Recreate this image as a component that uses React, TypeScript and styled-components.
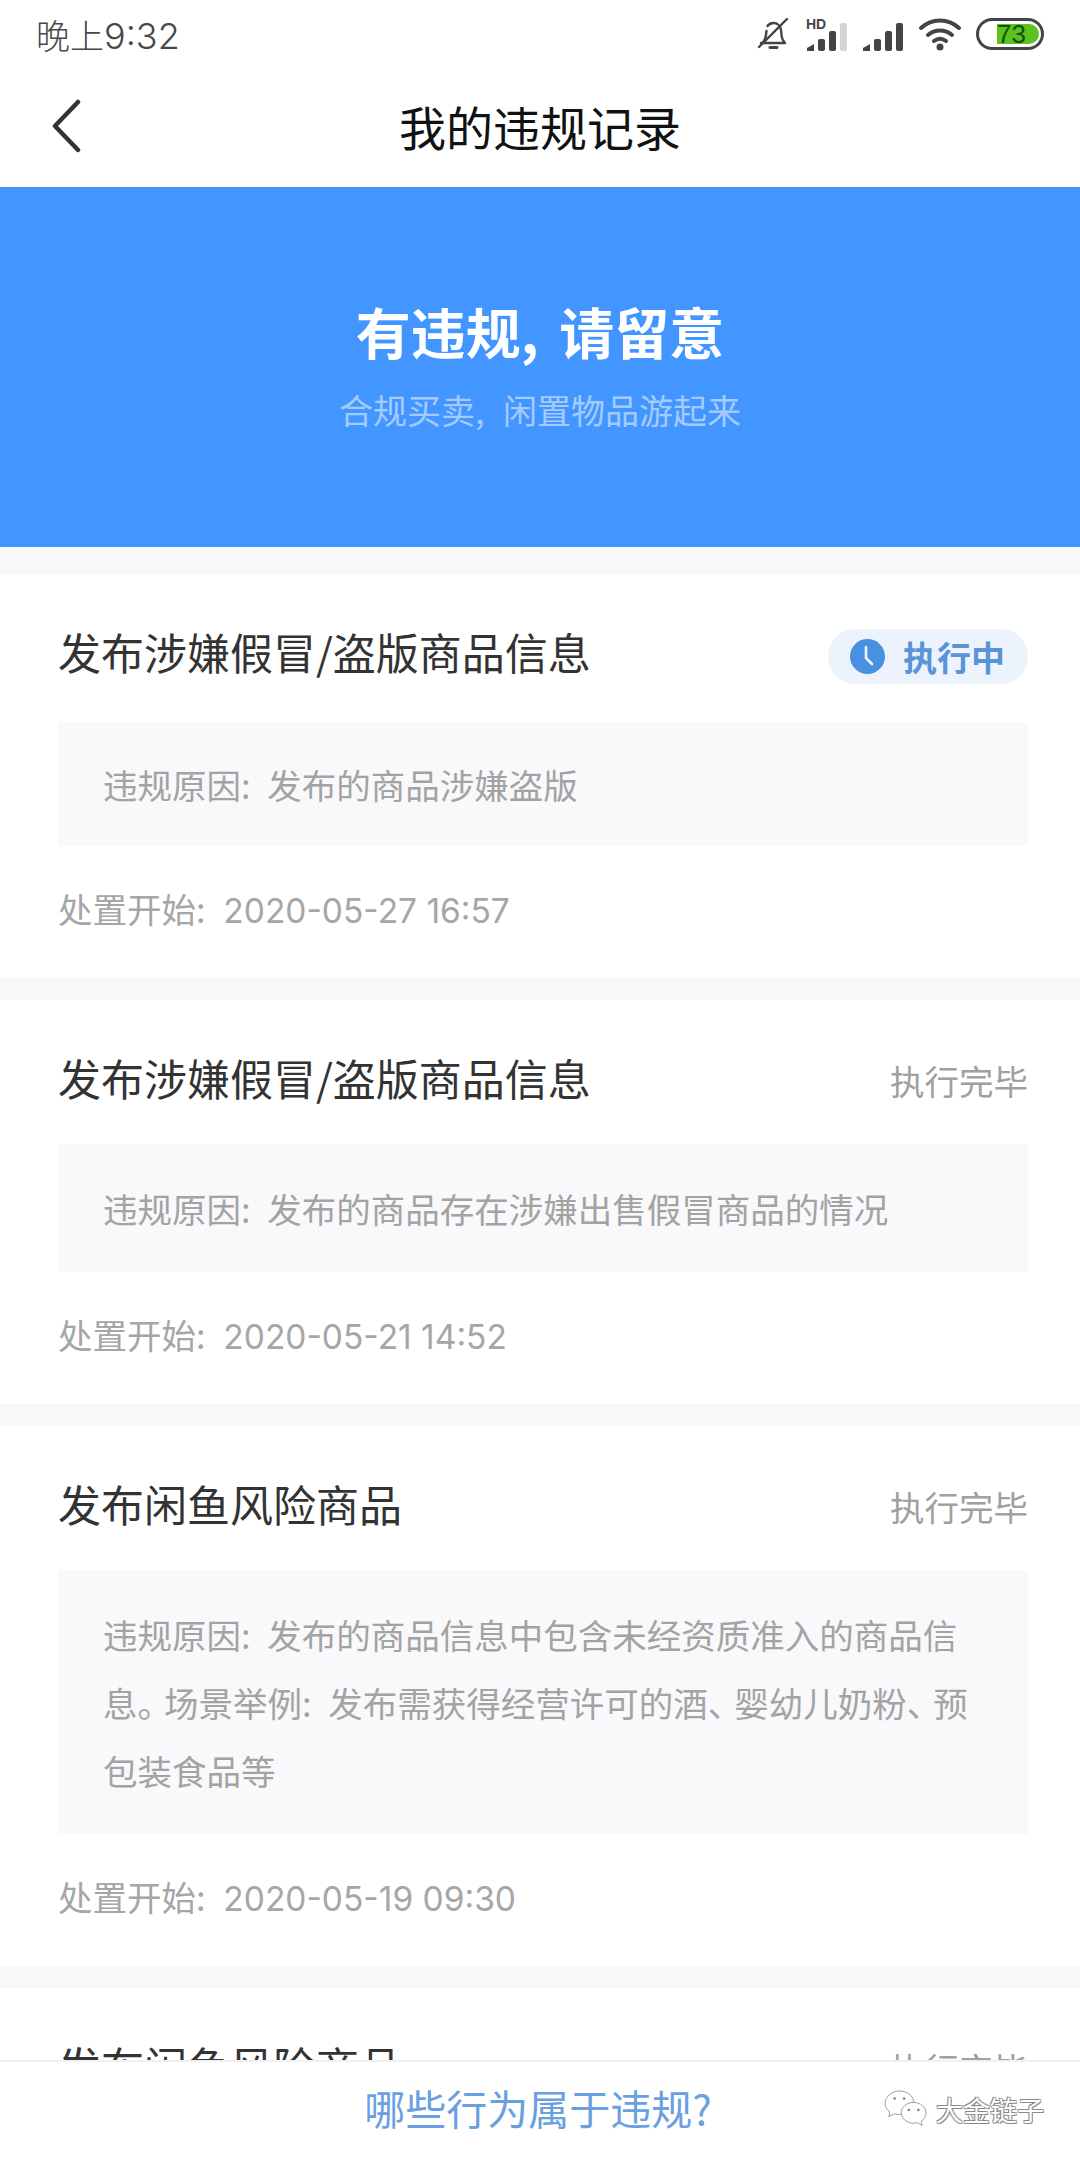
import styled, { createGlobalStyle } from "styled-components";

const GlobalStyle = createGlobalStyle`
  html, body { margin: 0; padding: 0; background: #fff; }
  * { box-sizing: border-box; }
  body { font-family: "Noto Sans CJK SC", "Noto Sans", sans-serif; }
`;

const Page = styled.div`
  position: relative;
  width: 1080px;
  height: 2160px;
  display: flex;
  flex-direction: column;
  overflow: hidden;
  background: #f8f7fa;
`;

const StatusBar = styled.div`
  height: 68px;
  padding: 0 36px;
  display: flex;
  align-items: center;
  justify-content: space-between;
  background: #fff;
`;

const Time = styled.span`
  font-size: 34px;
  color: #484848;
  font-weight: 300;
`;

const TimeDigits = styled.span`
  font-family: Inter, "Noto Sans", sans-serif;
  font-size: 36px;
`;

const StatusIcons = styled.div`
  display: flex;
  align-items: center;
  gap: 14px;
`;

const NavBar = styled.div`
  position: relative;
  height: 119px;
  display: flex;
  align-items: center;
  justify-content: center;
  background: #fff;
`;

const BackIcon = styled.svg`
  position: absolute;
  left: 50px;
  top: 31px;
`;

const NavTitle = styled.h1`
  margin: 0;
  font-size: 47px;
  font-weight: 400;
  color: #111;
  line-height: 1;
  transform: translateY(-2px);
`;

const Hero = styled.div`
  height: 360px;
  padding-bottom: 8px;
  display: flex;
  flex-direction: column;
  align-items: center;
  justify-content: center;
  background: #4396ff;
`;

const HeroTitle = styled.div`
  font-size: 55px;
  font-weight: 700;
  color: #fff;
  line-height: 72px;
  word-spacing: 8px;
`;

const HeroSub = styled.div`
  margin-top: 22px;
  font-size: 34px;
  color: #a4cbff;
  line-height: 44px;
  word-spacing: 11px;
`;

const List = styled.div`
  flex: 1;
  min-height: 0;
  overflow: hidden;
  padding-top: 27px;
  display: flex;
  flex-direction: column;
  gap: 22px;
`;

const Card = styled.section`
  flex: none;
  padding: 52px 52px 36px 58px;
  background: #fff;
`;

const CardHeader = styled.div<{ $active: boolean }>`
  height: ${(p) => (p.$active ? 56 : 52)}px;
  display: flex;
  align-items: flex-start;
  justify-content: space-between;
`;

const CardTitle = styled.h2`
  margin: 0;
  font-size: 43px;
  font-weight: 400;
  color: #333;
  line-height: 50px;
`;

const Pill = styled.div`
  height: 55px;
  width: 200px;
  margin-top: 3px;
  padding-left: 22px;
  display: flex;
  align-items: center;
  gap: 18px;
  border-radius: 28px;
  background: #edf3fd;
  color: #5a94d6;
  font-size: 34px;
  font-weight: 700;
`;

const DoneLabel = styled.span`
  margin-top: 3px;
  font-size: 34.500px;
  line-height: 50px;
  color: #a0a0a0;
`;

const ReasonBox = styled.div<{ $active: boolean }>`
  margin-top: 40px;
  padding: ${(p) => (p.$active ? 28 : 30)}px 44px ${(p) => (p.$active ? 28 : 30)}px 45px;
  background: #f9f8fb;
  font-size: 34.500px;
  line-height: 68px;
  color: #a3a3a3;
  word-spacing: 9px;
`;

const Punct = styled.span`
  margin-right: -8px;
`;

const DateLine = styled.div`
  margin-top: 28px;
  font-size: 34.500px;
  line-height: 68px;
  color: #a6a6a6;
  word-spacing: 10px;
`;

const DateValue = styled.span`
  font-family: Inter, "Noto Sans", sans-serif;
  font-size: 33.500px;
  line-height: 1;
  word-spacing: 0;
`;

const Footer = styled.div`
  flex: none;
  height: 100px;
  padding: 0 4px 8px 0;
  display: flex;
  align-items: center;
  justify-content: center;
  background: #fff;
  border-top: 2px solid #f1f1f3;
  font-size: 41px;
  color: #6a9fe0;
`;

const Watermark = styled.div`
  position: absolute;
  right: 36px;
  bottom: 32px;
  display: flex;
  align-items: center;
  gap: 8px;
  font-size: 27px;
  line-height: 1;
  color: #fff;
  text-shadow: -1px -1px 0 #888, 1px 1px 0 #888, 1px -1px 0 #aaa, -1px 1px 0 #aaa;
`;

const BellOff = () => (
  <svg width="36" height="36" viewBox="0 0 36 36" fill="none" stroke="#444" strokeWidth="2.4" strokeLinecap="round" strokeLinejoin="round">
    <path d="M5 27h24c-2-2-3-3-3.400-7l-.6-6c-.5-4-3.500-7-7.500-7-2.500 0-4.500 1-6 3" />
    <path d="M10.500 15 9.800 20c-.4 3.500-1.500 5-3.300 7" />
    <path d="M3 31 31 3" />
    <path d="M14 31.500h7" strokeWidth="3" />
  </svg>
);

const SignalBars = ({ last, hd }: { last: string; hd?: boolean }) => (
  <svg width="42" height="38" viewBox="0 0 42 38">
    {hd && (
      <text x="0" y="14" fontSize="14" fontWeight="700" fill="#444" fontFamily="Liberation Sans, sans-serif">
        HD
      </text>
    )}
    <path d="M1 36v-3l7-4v7z" fill="#444" />
    <rect x="12" y="24" width="7" height="12" rx="2" fill="#444" />
    <rect x="23" y="16" width="7" height="20" rx="2" fill="#444" />
    <rect x="34" y="8" width="7" height="28" rx="2" fill={last} />
  </svg>
);

const Wifi = () => (
  <svg width="44" height="36" viewBox="0 0 44 36" fill="none" stroke="#444" strokeWidth="4" strokeLinecap="round">
    <path d="M3 12C14 2 30 2 41 12" />
    <path d="M10 19c7-6 17-6 24 0" />
    <path d="M16 25c4-3 8-3 12 0" />
    <circle cx="22" cy="31" r="3.500" fill="#444" stroke="none" />
  </svg>
);

const Battery = () => (
  <svg width="68" height="32" viewBox="0 0 68 32">
    <rect x="1.500" y="1.500" width="65" height="29" rx="14.500" fill="#fff" stroke="#444" strokeWidth="3" />
    <path d="M21 6h32a10 10 0 0 1 0 20H21z" fill="#5cc21f" />
    <text x="21" y="25" fontSize="26" fill="#14500a" fontFamily="Liberation Sans, sans-serif">
      73
    </text>
  </svg>
);

const ClockIcon = () => (
  <svg width="35" height="35" viewBox="0 0 35 35">
    <circle cx="17.500" cy="17.500" r="17.500" fill="#4a90e2" />
    <path d="M16 8v11l6 6" fill="none" stroke="#edf3fd" strokeWidth="2.600" strokeLinecap="round" strokeLinejoin="round" />
  </svg>
);

const WeChatMark = () => (
  <svg width="44" height="38" viewBox="0 0 46 40" fill="#fff" stroke="#999" strokeWidth="1">
    <path d="M16 1C8 1 1 7 1 14c0 4 2 7 5 9l-1 5 6-3c2 .6 3 .8 5 .8 8 0 15-5.800 15-12.800S24 1 16 1z" />
    <path d="M31 13c-7 0-13 5-13 11s6 11 13 11c1.500 0 3-.2 4-.6l5 3-1-4.400c3-2 5-5 5-9 0-6-6-11-13-11z" />
    <circle cx="11" cy="9" r="1.400" fill="#888" stroke="none" />
    <circle cx="21" cy="9" r="1.400" fill="#888" stroke="none" />
    <circle cx="26" cy="21" r="1.400" fill="#888" stroke="none" />
    <circle cx="36" cy="21" r="1.400" fill="#888" stroke="none" />
  </svg>
);

const records = [
  {
    title: "发布涉嫌假冒/盗版商品信息",
    active: true,
    reason: "违规原因: 发布的商品涉嫌盗版",
    date: "2020-05-27 16:57",
  },
  {
    title: "发布涉嫌假冒/盗版商品信息",
    active: false,
    reason: "违规原因: 发布的商品存在涉嫌出售假冒商品的情况",
    date: "2020-05-21 14:52",
  },
  {
    title: "发布闲鱼风险商品",
    active: false,
    reason:
      "违规原因: 发布的商品信息中包含未经资质准入的商品信息。场景举例: 发布需获得经营许可的酒、婴幼儿奶粉、预包装食品等",
    date: "2020-05-19 09:30",
  },
  {
    title: "发布闲鱼风险商品",
    active: false,
    reason: "违规原因: 发布的商品信息中包含未经资质准入的商品信息",
    date: "2020-05-19 09:30",
  },
];

// the 。 and 、 sit tighter in the reference than a full em
const withTightPunct = (text: string) =>
  text.split(/([。、])/).map((part, i) =>
    part === "。" || part === "、" ? <Punct key={i}>{part}</Punct> : part
  );

const App = () => {
  return (
    <Page>
      <GlobalStyle />
      <StatusBar>
        <Time>
          晚上<TimeDigits>9:32</TimeDigits>
        </Time>
        <StatusIcons>
          <BellOff />
          <SignalBars last="#d4d4d4" hd />
          <SignalBars last="#444" />
          <Wifi />
          <Battery />
        </StatusIcons>
      </StatusBar>
      <NavBar>
        <BackIcon width="32" height="54" viewBox="0 0 32 54" fill="none" stroke="#333" strokeWidth="4.500" strokeLinecap="round" strokeLinejoin="round">
          <path d="M28 3 5 27l23 24" />
        </BackIcon>
        <NavTitle>我的违规记录</NavTitle>
      </NavBar>
      <Hero>
        <HeroTitle>有违规, 请留意</HeroTitle>
        <HeroSub>合规买卖, 闲置物品游起来</HeroSub>
      </Hero>
      <List>
        {records.map((r, i) => (
          <Card key={i}>
            <CardHeader $active={r.active}>
              <CardTitle>{r.title}</CardTitle>
              {r.active ? (
                <Pill>
                  <ClockIcon />
                  执行中
                </Pill>
              ) : (
                <DoneLabel>执行完毕</DoneLabel>
              )}
            </CardHeader>
            <ReasonBox $active={r.active}>{withTightPunct(r.reason)}</ReasonBox>
            <DateLine>
              处置开始: <DateValue>{r.date}</DateValue>
            </DateLine>
          </Card>
        ))}
      </List>
      <Footer>哪些行为属于违规?</Footer>
      <Watermark>
        <WeChatMark />
        大金链子
      </Watermark>
    </Page>
  );
};

export default App;
